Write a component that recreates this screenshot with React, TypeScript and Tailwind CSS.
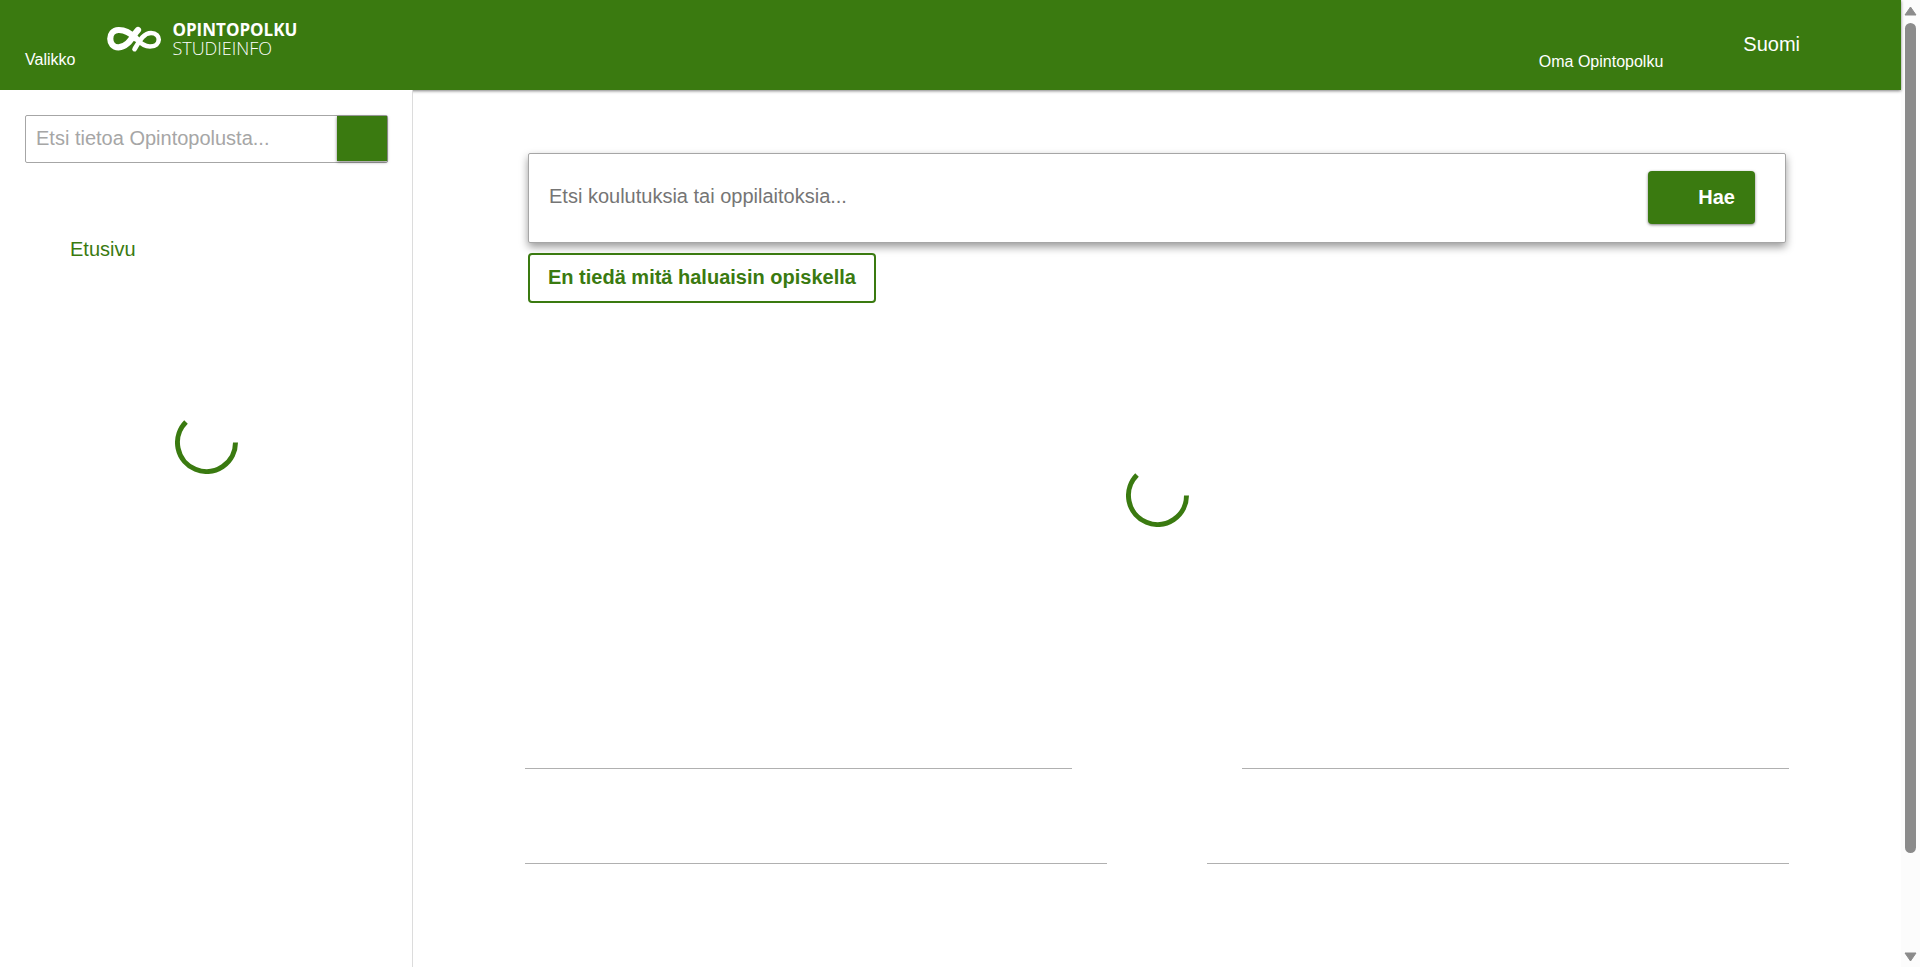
import React from "react";

function Spinner() {
  return (
    <svg viewBox="0 0 63 63" className="size-[63px]" role="progressbar" aria-label="Ladataan">
      <path d="M60.5 31.5A29 29 0 1 1 11 11" fill="none" stroke="#3a7a10" strokeWidth="5" />
    </svg>
  );
}

function LogoMark() {
  return (
    <svg viewBox="0 0 56 30" className="h-[30px] w-14" fill="none" stroke="#fff" strokeLinecap="round" aria-hidden="true">
      <path d="M32 6C27 11 23 23 12.5 23.300C1.500 23.500 1.500 6.300 12.500 6C19 5.800 25 9.500 30 14.500" strokeWidth="6.200" />
      <path d="M30 14.500C34 19 38 22.500 44 22.500C55.500 22.500 55.500 9 45 9C37 9 33 18 28.500 25.200" strokeWidth="4.600" />
    </svg>
  );
}

function Header() {
  return (
    <header className="relative z-10 flex h-[90px] shrink-0 items-start bg-[#3a7a10] text-white shadow-[0_1px_3px_rgba(0,0,0,0.5)]">
      <button type="button" className="ml-[25px] pt-[50px] text-base leading-5">Valikko</button>
      <a href="#etusivu" className="ml-[31px] flex items-start gap-2.5 pt-5" aria-label="Opintopolku Studieinfo">
        <span className="pt-1"><LogoMark /></span>
        <span className="flex flex-col font-['Open_Sans',sans-serif] leading-[18px]">
          <span className="text-[17px] leading-[19px] font-bold">OPINTOPOLKU</span>
          <span className="text-lg leading-[18px] font-light">STUDIEINFO</span>
        </span>
      </a>
      <div className="ml-auto flex items-start pr-[101px]">
        <button type="button" className="pt-[52px] text-base leading-5">Oma Opintopolku</button>
        <button type="button" className="ml-20 pt-8 text-xl leading-6">Suomi</button>
      </div>
    </header>
  );
}

function Sidebar() {
  return (
    <aside className="relative z-20 flex w-[413px] shrink-0 flex-col border-r border-[#dcdcdc] bg-white">
      <form className="mt-[25px] mr-6 ml-[25px] flex h-12 items-start rounded-xs border border-[#a6a6a6]">
        <input
          type="search"
          aria-label="Etsi tietoa Opintopolusta"
          placeholder="Etsi tietoa Opintopolusta..."
          className="h-[45px] min-w-0 flex-1 px-2.5 text-xl outline-none placeholder:text-[#a6a6a6]"
        />
        <button type="submit" aria-label="Etsi" className="h-[45px] w-[50px] bg-[#3a7a10] shadow-[0_1px_3px_rgba(0,0,0,0.5)]" />
      </form>
      <nav className="mt-[74px] pl-[70px]">
        <a href="#etusivu" className="text-xl leading-6 text-[#3a7a10]">Etusivu</a>
      </nav>
      <div className="mt-[148px] flex justify-center"><Spinner /></div>
    </aside>
  );
}

function Main() {
  return (
    <main className="flex min-w-0 flex-1 justify-center px-8 pt-[63px]">
      <div className="flex w-full max-w-[1264px] flex-col">
        <form className="mx-[3px] flex h-[90px] items-center rounded-xs border border-[#a6a6a6] bg-white pr-[30px] pb-0.5 shadow-[0_4px_8px_rgba(0,0,0,0.4)]">
          <input
            type="search"
            aria-label="Etsi koulutuksia tai oppilaitoksia"
            placeholder="Etsi koulutuksia tai oppilaitoksia..."
            className="h-12 min-w-0 flex-1 px-5 pb-0.5 text-xl outline-none placeholder:text-[#757575]"
          />
          <button type="submit" className="h-[53px] w-[107px] rounded bg-[#3a7a10] pr-5 text-right text-xl font-bold text-white shadow-[0_1px_3px_rgba(0,0,0,0.5)]">Hae</button>
        </form>
        <button type="button" className="mx-[3px] mt-2.5 h-[50px] self-start rounded border-2 border-[#3a7a10] px-[18px] pb-0.5 text-xl leading-6 font-bold text-[#3a7a10]">
          En tiedä mitä haluaisin opiskella
        </button>
        <div className="mt-[161px] flex justify-center"><Spinner /></div>
        <section className="mt-[241px] flex gap-[170px]">
          <hr className="flex-1 border-[#b0b0b0]" />
          <hr className="flex-1 border-[#b0b0b0]" />
        </section>
        <section className="mt-[94px] flex gap-[100px]">
          <hr className="flex-1 border-[#b0b0b0]" />
          <hr className="flex-1 border-[#b0b0b0]" />
        </section>
      </div>
    </main>
  );
}

function Scrollbar() {
  return (
    <div className="flex w-[19px] shrink-0 flex-col items-center bg-[#fcfcfc]" aria-hidden="true">
      <svg viewBox="0 0 13 10" className="mt-1.5 h-2.5 w-[13px]"><path d="M6.500 1L12 9H1Z" fill="#8b8b8b" stroke="#8b8b8b" strokeLinejoin="round" /></svg>
      <div className="my-[7px] flex min-h-0 flex-1 flex-col">
        <div className="h-[90%] w-[11px] rounded-full bg-[#8b8b8b]" />
      </div>
      <svg viewBox="0 0 13 10" className="mb-[5px] h-2.5 w-[13px]"><path d="M6.500 9L12 1H1Z" fill="#8b8b8b" stroke="#8b8b8b" strokeLinejoin="round" /></svg>
    </div>
  );
}

export default function App() {
  return (
    <div className="flex h-screen overflow-hidden bg-white font-['Liberation_Sans',Arial,sans-serif]">
      <div className="flex min-w-0 flex-1 flex-col">
        <Header />
        <div className="flex min-h-0 flex-1">
          <Sidebar />
          <Main />
        </div>
      </div>
      <Scrollbar />
    </div>
  );
}
